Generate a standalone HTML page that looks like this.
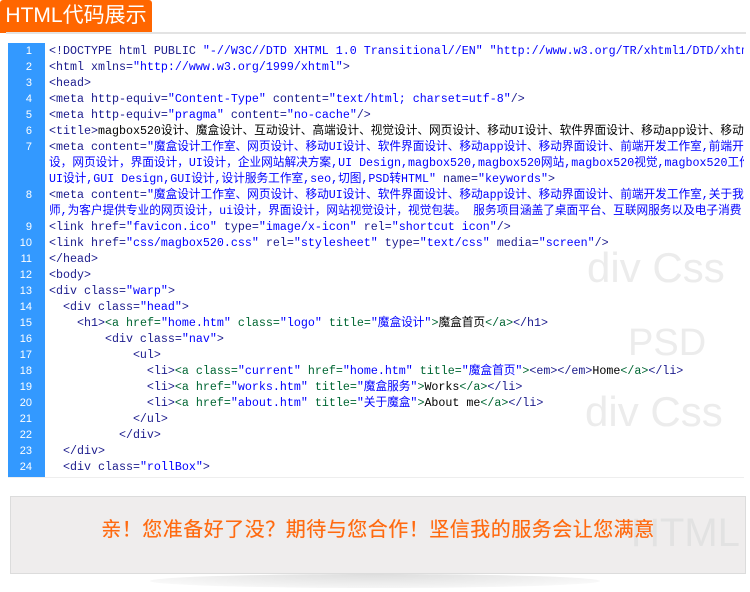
<!DOCTYPE html>
<html><head><meta charset="utf-8"><style>
body{margin:0;width:750px;height:592px;background:#fff;position:relative;overflow:hidden;font-family:"Liberation Sans","Noto Sans CJK SC",sans-serif}
.tab{position:absolute;left:0;top:0;width:152px;height:33px;background:#ff6600;color:#fff;font-size:21px;line-height:32px;text-align:center;border-radius:3px 3px 0 0}
.hr{position:absolute;left:6px;top:32px;width:740px;height:2px;background:#e3e3e3}
.code{position:absolute;left:8px;top:43px;width:736px;height:434px;overflow:hidden;border-bottom:1px solid #eee}
.gut{position:absolute;left:0;top:0;width:37px;height:434px;background:#3399ff}
.row{position:absolute;left:0;height:16px;font:11.67px/16px "Liberation Mono","Noto Sans CJK SC",monospace;white-space:pre;color:#1a1a8c}
.n{position:absolute;left:0;width:24px;text-align:right;color:#fff;font:11px/16px "Liberation Sans",sans-serif}
.c{position:absolute;left:41px}
.v{color:#0000ff}.k{color:#000}.g{color:#006633}
.wm{position:absolute;color:#ececec;font-family:"Liberation Sans",sans-serif;font-size:42px}
.box{position:absolute;left:10px;top:496px;width:734px;height:76px;background:#efeded;border:1px solid #dcdcdc}
.box p{margin:0;position:absolute;left:0;right:0;top:18px;text-align:center;color:#ff6a10;font-size:20px;letter-spacing:0.5px;line-height:30px;text-shadow:0 0 0.4px #ff6a10}
.shadow{position:absolute;left:150px;top:574px;width:450px;height:14px;border-radius:50%;background:radial-gradient(ellipse at center top,#ddd,rgba(255,255,255,0))}
</style></head><body>
<div class="tab">HTML代码展示</div>
<div class="hr"></div>
<div class="wm" style="left:587px;top:244px">div Css</div>
<div class="wm" style="left:628px;top:322px;font-size:38px">PSD</div>
<div class="wm" style="left:585px;top:388px">div Css</div>
<div class="code">
<div class="gut"></div>
<div class="row" style="top:0"><span class="n">1</span><span class="c">&lt;!DOCTYPE html PUBLIC <span class="v">"-//W3C//DTD XHTML 1.0 Transitional//EN" "http://www.w3.org/TR/xhtml1/DTD/xhtml1-transitional.dtd"</span>&gt;</span></div>
<div class="row" style="top:16px"><span class="n">2</span><span class="c">&lt;html xmlns=<span class="v">"http://www.w3.org/1999/xhtml"</span>&gt;</span></div>
<div class="row" style="top:32px"><span class="n">3</span><span class="c">&lt;head&gt;</span></div>
<div class="row" style="top:48px"><span class="n">4</span><span class="c">&lt;meta http-equiv=<span class="v">"Content-Type"</span> content=<span class="v">"text/html; charset=utf-8"</span>/&gt;</span></div>
<div class="row" style="top:64px"><span class="n">5</span><span class="c">&lt;meta http-equiv=<span class="v">"pragma"</span> content=<span class="v">"no-cache"</span>/&gt;</span></div>
<div class="row" style="top:80px"><span class="n">6</span><span class="c">&lt;title&gt;<span class="k">magbox520设计、魔盒设计、互动设计、高端设计、视觉设计、网页设计、移动UI设计、软件界面设计、移动app设计、移动界面设计</span></span></div>
<div class="row" style="top:96px"><span class="n">7</span><span class="c">&lt;meta content=<span class="v">"魔盒设计工作室、网页设计、移动UI设计、软件界面设计、移动app设计、移动界面设计、前端开发工作室,前端开发</span></span></div>
<div class="row" style="top:112px"><span class="c v">设，网页设计，界面设计，UI设计，企业网站解决方案,UI Design,magbox520,magbox520网站,magbox520视觉,magbox520工作室</span></div>
<div class="row" style="top:128px"><span class="c"><span class="v">UI设计,GUI Design,GUI设计,设计服务工作室,seo,切图,PSD转HTML"</span> name=<span class="v">"keywords"</span>&gt;</span></div>
<div class="row" style="top:144px"><span class="n">8</span><span class="c">&lt;meta content=<span class="v">"魔盒设计工作室、网页设计、移动UI设计、软件界面设计、移动app设计、移动界面设计、前端开发工作室,关于我们</span></span></div>
<div class="row" style="top:160px"><span class="c v">师,为客户提供专业的网页设计，ui设计，界面设计，网站视觉设计，视觉包装。 服务项目涵盖了桌面平台、互联网服务以及电子消费</span></div>
<div class="row" style="top:176px"><span class="n">9</span><span class="c">&lt;link href=<span class="v">"favicon.ico"</span> type=<span class="v">"image/x-icon"</span> rel=<span class="v">"shortcut icon"</span>/&gt;</span></div>
<div class="row" style="top:192px"><span class="n">10</span><span class="c">&lt;link href=<span class="v">"css/magbox520.css"</span> rel=<span class="v">"stylesheet"</span> type=<span class="v">"text/css"</span> media=<span class="v">"screen"</span>/&gt;</span></div>
<div class="row" style="top:208px"><span class="n">11</span><span class="c">&lt;/head&gt;</span></div>
<div class="row" style="top:224px"><span class="n">12</span><span class="c">&lt;body&gt;</span></div>
<div class="row" style="top:240px"><span class="n">13</span><span class="c">&lt;div class=<span class="v">"warp"</span>&gt;</span></div>
<div class="row" style="top:256px"><span class="n">14</span><span class="c">  &lt;div class=<span class="v">"head"</span>&gt;</span></div>
<div class="row" style="top:272px"><span class="n">15</span><span class="c">    &lt;h1&gt;<span class="g">&lt;a href=<span class="v">"home.htm"</span> class=<span class="v">"logo"</span> title=<span class="v">"魔盒设计"</span>&gt;</span><span class="k">魔盒首页</span><span class="g">&lt;/a&gt;</span>&lt;/h1&gt;</span></div>
<div class="row" style="top:288px"><span class="n">16</span><span class="c">        &lt;div class=<span class="v">"nav"</span>&gt;</span></div>
<div class="row" style="top:304px"><span class="n">17</span><span class="c">            &lt;ul&gt;</span></div>
<div class="row" style="top:320px"><span class="n">18</span><span class="c">              &lt;li&gt;<span class="g">&lt;a class=<span class="v">"current"</span> href=<span class="v">"home.htm"</span> title=<span class="v">"魔盒首页"</span>&gt;</span>&lt;em&gt;&lt;/em&gt;<span class="k">Home</span><span class="g">&lt;/a&gt;</span>&lt;/li&gt;</span></div>
<div class="row" style="top:336px"><span class="n">19</span><span class="c">              &lt;li&gt;<span class="g">&lt;a href=<span class="v">"works.htm"</span> title=<span class="v">"魔盒服务"</span>&gt;</span><span class="k">Works</span><span class="g">&lt;/a&gt;</span>&lt;/li&gt;</span></div>
<div class="row" style="top:352px"><span class="n">20</span><span class="c">              &lt;li&gt;<span class="g">&lt;a href=<span class="v">"about.htm"</span> title=<span class="v">"关于魔盒"</span>&gt;</span><span class="k">About me</span><span class="g">&lt;/a&gt;</span>&lt;/li&gt;</span></div>
<div class="row" style="top:368px"><span class="n">21</span><span class="c">            &lt;/ul&gt;</span></div>
<div class="row" style="top:384px"><span class="n">22</span><span class="c">          &lt;/div&gt;</span></div>
<div class="row" style="top:400px"><span class="n">23</span><span class="c">  &lt;/div&gt;</span></div>
<div class="row" style="top:416px"><span class="n">24</span><span class="c">  &lt;div class=<span class="v">"rollBox"</span>&gt;</span></div>
</div>
<div class="box"><div class="wm" style="left:620px;top:14px;font-size:40px;color:#e2e2e2">HTML</div><p>亲！您准备好了没？期待与您合作！坚信我的服务会让您满意</p></div>
<div class="shadow"></div>
</body></html>
